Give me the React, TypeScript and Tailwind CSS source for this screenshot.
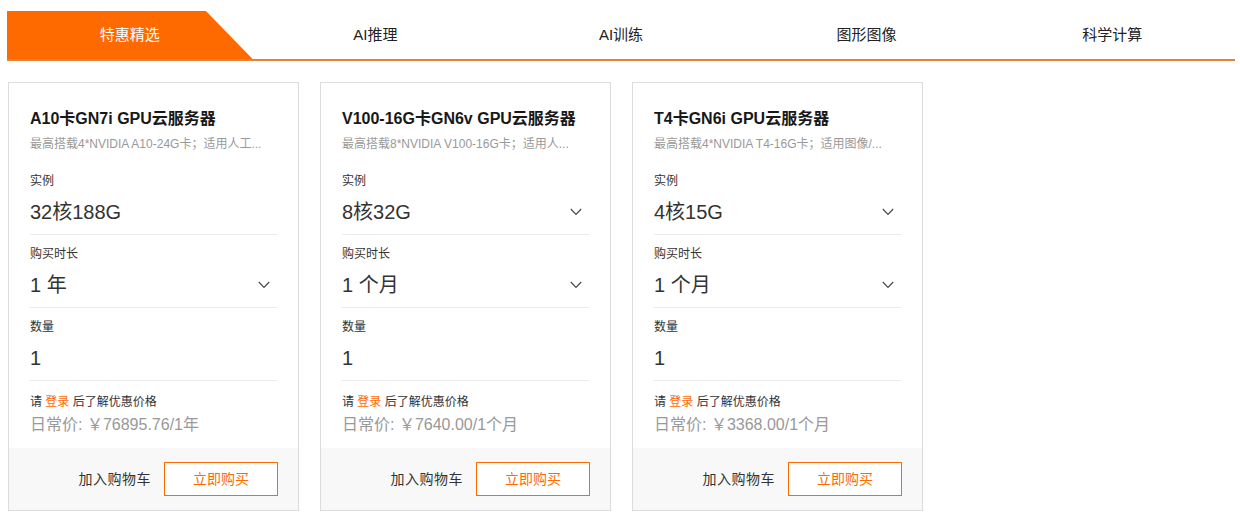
const tabs = ['特惠精选', 'AI推理', 'AI训练', '图形图像', '科学计算'];

interface Product {
  title: string;
  desc: string;
  spec: string;
  specSelect: boolean;
  duration: string;
  price: string;
}

const products: Product[] = [
  {
    title: 'A10卡GN7i GPU云服务器',
    desc: '最高搭载4*NVIDIA A10-24G卡；适用人工...',
    spec: '32核188G',
    specSelect: false,
    duration: '1 年',
    price: '日常价: ￥76895.76/1年',
  },
  {
    title: 'V100-16G卡GN6v GPU云服务器',
    desc: '最高搭载8*NVIDIA V100-16G卡；适用人...',
    spec: '8核32G',
    specSelect: true,
    duration: '1 个月',
    price: '日常价: ￥7640.00/1个月',
  },
  {
    title: 'T4卡GN6i GPU云服务器',
    desc: '最高搭载4*NVIDIA T4-16G卡；适用图像/...',
    spec: '4核15G',
    specSelect: true,
    duration: '1 个月',
    price: '日常价: ￥3368.00/1个月',
  },
];

function Chevron() {
  return (
    <svg width="12" height="8" viewBox="0 0 12 8" className="mr-[7px] shrink-0">
      <polyline points="0.8,1 6,6.4 11.2,1" fill="none" stroke="#444" strokeWidth="1.1" />
    </svg>
  );
}

function Field({ label, value, select }: { label: string; value: string; select?: boolean }) {
  return (
    <div className="pt-[10px] pb-[8px] border-b border-[#ebebeb]">
      <div className="text-[12px] leading-[18px] text-[#333]">{label}</div>
      <div className="mt-[8px] h-[28px] flex items-center justify-between">
        <span className="text-[20px] leading-[28px] text-[#333]">{value}</span>
        {select && <Chevron />}
      </div>
    </div>
  );
}

function ProductCard({ p }: { p: Product }) {
  return (
    <div className="border border-[#dcdcdc] bg-white flex flex-col">
      <div className="px-[21px] pt-[24px]">
        <div className="text-[16px] leading-[24px] font-bold text-[#181818]">{p.title}</div>
        <div className="mt-1 text-[12px] leading-[18px] text-[#999] whitespace-nowrap">{p.desc}</div>
        <div className="mt-[9px]">
          <Field label="实例" value={p.spec} select={p.specSelect} />
          <Field label="购买时长" value={p.duration} select />
          <Field label="数量" value="1" />
        </div>
        <div className="mt-[12px] text-[12px] leading-[18px] text-[#333]">
          请 <span className="text-[#ff6a00]">登录</span> 后了解优惠价格
        </div>
        <div className="text-[16px] leading-[22px] text-[#999] mt-[3px]">{p.price}</div>
      </div>
      <div className="mt-[12px] h-[62px] bg-[#f8f8f8] flex items-center justify-end gap-[13px] pr-[20px]">
        <span className="text-[14px] text-[#333] tracking-[0.5px]">加入购物车</span>
        <button className="w-[114px] h-[34px] border border-[#ff6a00] bg-white text-[14px] text-[#ff6a00]">
          立即购买
        </button>
      </div>
    </div>
  );
}

export default function App() {
  return (
    <div
      className="w-[1240px] h-[524px] bg-white px-[7px] pt-[11px]"
      style={{ fontFamily: '"Liberation Sans", "Noto Sans CJK SC", sans-serif' }}
    >
      <div className="w-[1228px] border-b-2 border-[#e2823d]">
        <div className="grid grid-cols-5 h-[48px]">
          {tabs.map((t, i) => (
            <div key={t} className="relative flex items-center justify-center">
              {i === 0 && (
                <div className="absolute inset-0 bg-[#ff6a00] [clip-path:polygon(0_0,81%_0,100%_100%,0_100%)]" />
              )}
              <span className={`relative text-[15px] ${i === 0 ? 'text-white' : 'text-[#222]'}`}>{t}</span>
            </div>
          ))}
        </div>
      </div>
      <div className="mt-[21px] ml-px grid grid-cols-[repeat(4,291px)] gap-[21px]">
        {products.map((p) => (
          <ProductCard key={p.title} p={p} />
        ))}
      </div>
    </div>
  );
}
